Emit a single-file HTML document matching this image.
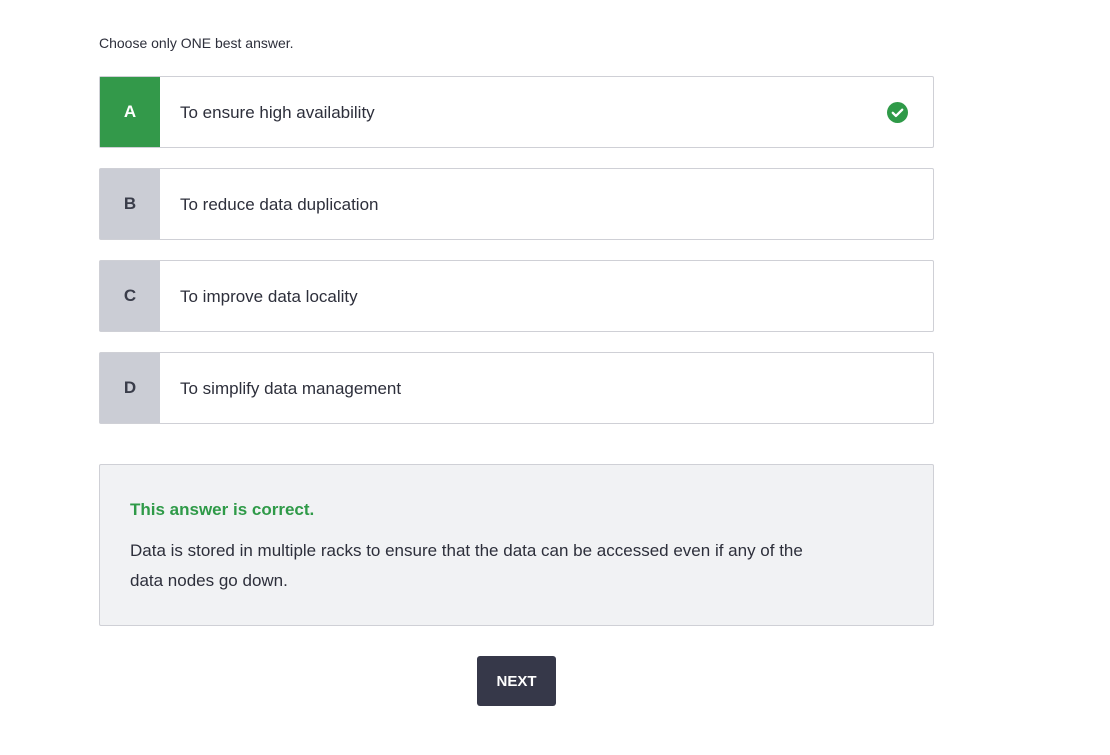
<!DOCTYPE html>
<html><head><style>
body{margin:0;background:#fff;font-family:"Liberation Sans",sans-serif;color:#2d2f3b;width:1110px;height:755px;position:relative;overflow:hidden}
.hint{position:absolute;left:99px;top:35px;font-size:14px;color:#2d2f3b}
.opt{position:absolute;left:99px;width:833px;height:70px;border:1px solid #cfd0d6;border-radius:2px;background:#fff}
.opt .l{position:absolute;left:0;top:0;width:60px;height:70px;background:#cbcdd5;display:flex;align-items:center;justify-content:center;font-weight:bold;font-size:17px;color:#3a3d4a}
.opt .t{position:absolute;left:80px;top:1px;line-height:70px;font-size:17px;color:#2d2f3b}
.fb{position:absolute;left:99px;top:464px;width:833px;height:160px;border:1px solid #cfd0d6;background:#f1f2f4;border-radius:2px}
.fb .h{position:absolute;left:30px;top:35px;font-weight:bold;font-size:17px;color:#2f9a48}
.fb .p{position:absolute;left:30px;top:71px;width:690px;font-size:17px;line-height:30px;color:#2d2f3b}
.btn{position:absolute;left:477px;top:656px;width:79px;height:50px;background:#363849;border-radius:3px;color:#fff;font-weight:bold;font-size:15px;display:flex;align-items:center;justify-content:center}
</style></head><body>
<div class="hint">Choose only ONE best answer.</div>
<div class="opt" style="top:76px"><div class="l" style="background:#33994a;color:#fff">A</div><div class="t">To ensure high availability</div>
<svg style="position:absolute;left:787px;top:25px" width="21" height="21" viewBox="0 0 20 20"><circle cx="10" cy="10" r="10" fill="#2f9a48"/><path d="M5.5 10.3l3 3 6-6" fill="none" stroke="#fff" stroke-width="2.2" stroke-linecap="round" stroke-linejoin="round"/></svg></div>
<div class="opt" style="top:168px"><div class="l">B</div><div class="t">To reduce data duplication</div></div>
<div class="opt" style="top:260px"><div class="l">C</div><div class="t">To improve data locality</div></div>
<div class="opt" style="top:352px"><div class="l">D</div><div class="t">To simplify data management</div></div>
<div class="fb"><div class="h">This answer is correct.</div><div class="p">Data is stored in multiple racks to ensure that the data can be accessed even if any of the data nodes go down.</div></div>
<div class="btn">NEXT</div>
</body></html>
